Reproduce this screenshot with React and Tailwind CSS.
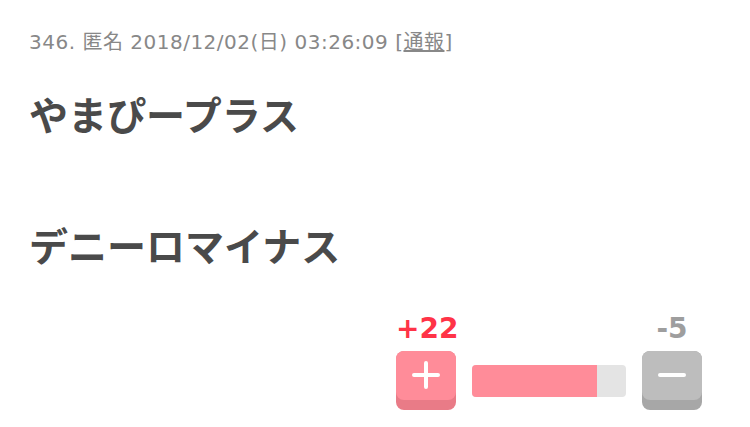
import React from 'react';

// 3D-ish vote button: darker base with the lighter face sitting on top
const VoteButton = ({ face, base, children }) => (
    <button className={`w-[60px] h-[59px] rounded-[8px] ${base} flex flex-col`}>
        <span className={`w-full h-[49px] rounded-[8px] ${face} flex items-center justify-center`}>
            {children}
        </span>
    </button>
);

const VoteBar = ({ plus, minus }) => {
    const ratio = plus / (plus + minus);

    return (
        <div className="flex justify-end pr-[48px]">
            <div className="flex flex-col">
                <div className="flex justify-between font-['DejaVu_Sans',sans-serif] font-bold text-[28px] leading-[32px]">
                    <span className="w-[62px] text-center text-[#ff3347]">+{plus}</span>
                    <span className="w-[60px] text-center text-[#9e9e9e]">-{minus}</span>
                </div>
                <div className="flex items-start gap-4 mt-[6px]">
                    <VoteButton face="bg-[#ff8c99]" base="bg-[#e97b87]">
                        <svg width="30" height="30" viewBox="0 0 30 30">
                            <path d="M15 3v24M3 15h24" stroke="#fff" strokeWidth="4" strokeLinecap="round" />
                        </svg>
                    </VoteButton>
                    <div className="w-[154px] h-[32px] mt-[14px] rounded-[4px] bg-[#e4e4e4] overflow-hidden">
                        <div className="h-full bg-[#ff8c99]" style={{ width: `${ratio * 100}%` }} />
                    </div>
                    <VoteButton face="bg-[#bdbdbd]" base="bg-[#a7a7a7]">
                        <svg width="30" height="30" viewBox="0 0 30 30">
                            <path d="M3 15h24" stroke="#fff" strokeWidth="4" strokeLinecap="round" />
                        </svg>
                    </VoteButton>
                </div>
            </div>
        </div>
    );
};

const App = () => {
    return (
        <div className="w-[750px] h-[427px] bg-white overflow-hidden">
            <div className="pt-[29px] px-[29px] font-['DejaVu_Sans','Noto_Sans_CJK_JP',sans-serif] text-[20px] leading-[26px] tracking-[0.5px] text-[#888]">
                346. 匿名 2018/12/02(日) 03:26:09 [<span className="underline">通報</span>]
            </div>
            <div className="mt-[26px] px-[29px] font-['Noto_Sans_CJK_JP',sans-serif] font-bold text-[39px] leading-[65.5px] text-[#4a4a4a]">
                <p>やまぴープラス</p>
                <p>&nbsp;</p>
                <p>デニーロマイナス</p>
            </div>
            <div className="mt-[35px]">
                <VoteBar plus={22} minus={5} />
            </div>
        </div>
    );
};

export default App;
